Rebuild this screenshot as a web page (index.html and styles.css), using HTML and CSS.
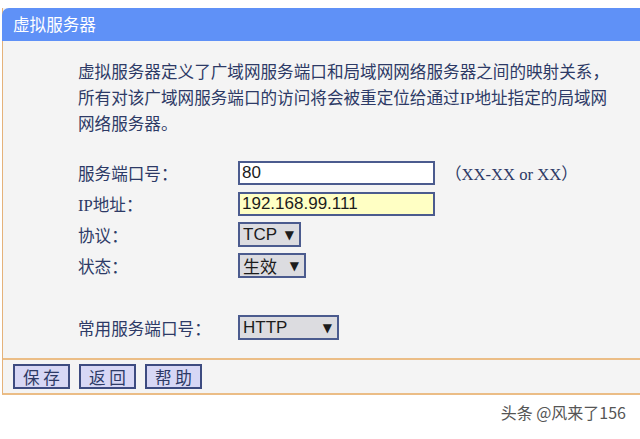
FILE: index.html
```html
<!DOCTYPE html>
<html lang="zh">
<head>
<meta charset="utf-8">
<link rel="stylesheet" href="styles.css">
</head>
<body>
<div class="page">
  <div class="panel">
    <div class="header">虚拟服务器</div>
    <div class="content">
      <p class="desc">虚拟服务器定义了广域网服务端口和局域网网络服务器之间的映射关系，所有对该广域网服务端口的访问将会被重定位给通过IP地址指定的局域网网络服务器。</p>
      <div class="form">
        <div class="label">服务端口号：</div>
        <div class="field"><span class="input">80</span><span class="hint">（XX-XX or XX）</span></div>
        <div class="label">IP地址：</div>
        <div class="field"><span class="input focus">192.168.99.111</span></div>
        <div class="label">协议：</div>
        <div class="field"><span class="select w-tcp">TCP<span class="arrow">▼</span></span></div>
        <div class="label">状态：</div>
        <div class="field"><span class="select w-state">生效<span class="arrow">▼</span></span></div>
        <div class="label"></div>
        <div class="field"></div>
        <div class="label">常用服务端口号：</div>
        <div class="field"><span class="select w-http">HTTP<span class="arrow">▼</span></span></div>
      </div>
    </div>
    <div class="footer">
      <span class="btn">保 存</span>
      <span class="btn">返 回</span>
      <span class="btn">帮 助</span>
    </div>
  </div>
  <div class="watermark">头条 @风来了156</div>
</div>
</body>
</html>
```
FILE: styles.css
```css
html, body {
  margin: 0;
  padding: 0;
  background: #ffffff;
}
.page {
  width: 640px;
  height: 439px;
  padding-top: 8px;
  box-sizing: border-box;
  overflow: hidden;
  font-family: "Liberation Serif", "Noto Sans CJK SC", serif;
  color: #2d3a66;
}
.panel {
  margin-left: 2px;
  border-left: 1px solid #e5b27a;
  border-bottom: 2px solid #ebbd86;
  background: #f4f4f4;
}
.header {
  height: 33px;
  line-height: 32px;
  background: #5f91f7;
  border-top-left-radius: 7px;
  margin-left: -1px;
  padding-left: 11px;
  color: #ffffff;
  font-family: "Noto Sans CJK SC", sans-serif;
  font-size: 16.6px;
}
.content {
  height: 317px;
  padding: 19px 0 0 75px;
  box-sizing: border-box;
}
.desc {
  margin: 0;
  width: 545px;
  font-size: 16.6px;
  line-height: 26px;
}
.form {
  margin-top: 19px;
  display: grid;
  grid-template-columns: 160px 1fr;
  grid-auto-rows: 31px;
  align-items: center;
  font-size: 16.6px;
}
.field {
  display: flex;
  align-items: center;
}
.input {
  box-sizing: border-box;
  width: 197px;
  height: 24px;
  border: 2px solid #4b5b8e;
  background: #ffffff;
  font-family: "Liberation Sans", Arial, sans-serif;
  font-size: 17px;
  line-height: 20px;
  padding-left: 2px;
  color: #1c1c1c;
}
.input.focus {
  background: #ffffc4;
}
.hint {
  margin-left: 10px;
  font-size: 16.6px;
}
.select {
  box-sizing: border-box;
  height: 25px;
  border: 2px solid #4b5b8e;
  background: #dcdce0;
  display: flex;
  align-items: center;
  justify-content: space-between;
  padding: 0 5px 0 3px;
  font-family: "Liberation Sans", "Noto Sans CJK SC", sans-serif;
  font-size: 17px;
  color: #1c1c1c;
}
.arrow {
  font-family: "DejaVu Sans", sans-serif;
  font-size: 12px;
}
.w-tcp { width: 63px; }
.w-state { width: 68px; }
.w-http { width: 101px; }
.footer {
  border-top: 2px solid #ebbd86;
  height: 35px;
  box-sizing: border-box;
  padding: 4px 0 0 10px;
  display: flex;
  gap: 9px;
  align-items: flex-start;
}
.btn {
  box-sizing: border-box;
  width: 57px;
  height: 25px;
  border: 2px solid #3d4b80;
  background: #d7d7f5;
  display: flex;
  align-items: center;
  justify-content: center;
  font-family: "Noto Sans CJK SC", sans-serif;
  font-size: 16.6px;
  color: #2d3a66;
}
.watermark {
  text-align: right;
  padding-right: 14px;
  margin-top: 5px;
  font-family: "Noto Sans CJK SC", sans-serif;
  font-size: 16px;
  color: #555555;
}
```
